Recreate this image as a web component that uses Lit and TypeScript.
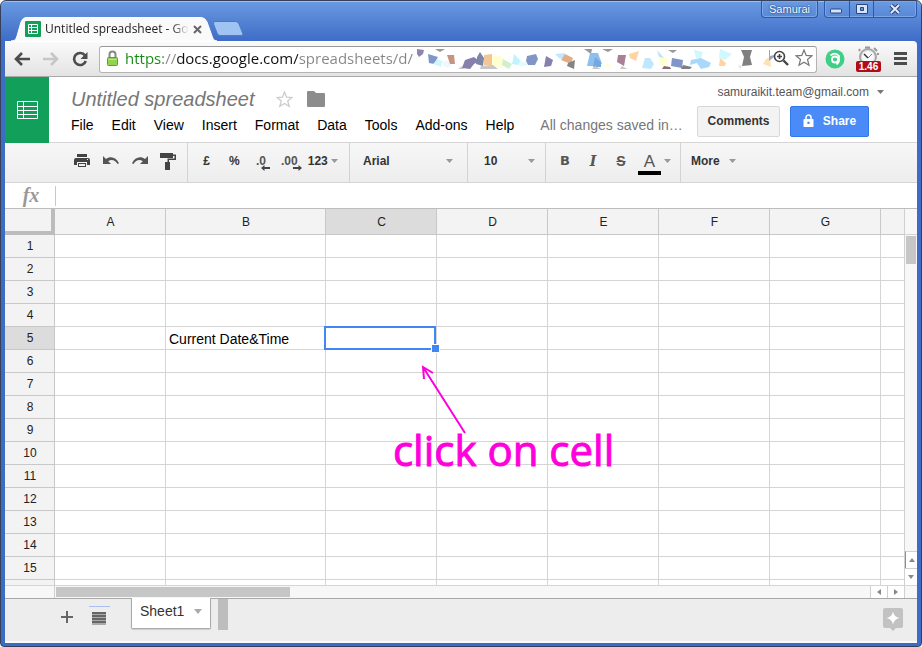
import { LitElement, html, css, svg } from "lit";
import { customElement } from "lit/decorators.js";
import { classMap } from "lit/directives/class-map.js";

const COLUMNS = ["A", "B", "C", "D", "E", "F", "G", ""];
const ROWS = Array.from({ length: 15 }, (_, i) => i + 1);
const MENUS = ["File", "Edit", "View", "Insert", "Format", "Data", "Tools", "Add-ons", "Help"];

/* Obscured tail of the address: [fill, points] */
const SHARDS: [string, string][] = [
  ["#8f86b0", "17,4 24,5 23,9 19,12 17,9"],
  ["#999999", "35,4 45,4 40,7"],
  ["#8096c8", "28,9 38,12 34,19 29,18"],
  ["#cff6ff", "38,14 42,16 41,22 33,19"],
  ["#eef8ff", "42,16 49,16 52,20 48,23 43,21"],
  ["#c99383", "47,10 54,10 55,19 50,19"],
  ["#cccccc", "58,24 62,21 64,24"],
  ["#8580ac", "65,15 74,12 79,16 74,19 70,24 62,23"],
  ["#7c86a6", "80,7 84,13 83,21 76,19 77,12"],
  ["#f3c795", "84,10 92,9 92,21 84,20"],
  ["#ffffcf", "92,10 101,11 104,16 102,23 92,20"],
  ["#cfefcf", "103,14 112,19 109,24 102,20"],
  ["#c8c8c8", "81,21 93,20 98,24 80,24"],
  ["#c2f2ff", "114,9 121,16 118,20 112,19"],
  ["#dffcff", "120,16 127,18 126,21 118,21"],
  ["#8096c8", "127,11 136,9 138,14 135,20 128,20 126,16"],
  ["#8680ac", "146,11 153,15 151,21 144,22"],
  ["#c2e8ff", "155,9 165,8 165,12 160,14"],
  ["#dfae88", "165,9 173,13 171,19 161,15"],
  ["#848484", "168,18 175,15 174,24 167,21"],
  ["#999999", "184,4 192,4 191,9"],
  ["#8cc0f0", "190,8 198,8 202,19 193,21 187,21"],
  ["#76a8e0", "195,12 201,17 201,22 193,22"],
  ["#c8c8c8", "195,21 201,24 192,24"],
  ["#999999", "202,4 213,4 208,7"],
  ["#fffee8", "205,17 211,19 210,24 204,23"],
  ["#a98098", "218,10 226,10 224,21 217,17"],
  ["#c8c8c8", "222,21 227,24 220,24"],
  ["#ffd4a0", "229,9 239,6 236,16 230,13"],
  ["#bee8ff", "245,13 250,13 254,19 251,24 242,23"],
  ["#ffffcf", "259,13 267,13 266,22 260,20"],
  ["#b8e4ff", "257,5 264,13 259,12"],
  ["#999999", "268,5 277,5 273,8"],
  ["#8096c8", "272,13 283,15 282,23 271,21"],
  ["#8a6c76", "264,21 270,22 271,24 262,24"],
  ["#808080", "283,20 292,22 290,24 281,24"],
  ["#cff8ff", "294,5 303,7 301,14 296,13"],
  ["#a8d8fc", "291,15 301,13 311,18 309,22 301,24 297,18 290,20"],
  ["#cff8ff", "320,4 332,9 325,15 319,13"],
  ["#ffd4a0", "320,13 326,18 325,21 319,21"],
  ["#808080", "341,5 352,5 350,12 352,20 342,21 344,12"],
  ["#e4e4e4", "338,20 342,21 340,24"],
  ["#ffe2b4", "366,14 370,12 371,22 363,19"],
  ["#92a8c8", "369,5 370,5 370,11 374,10 374,12 369,16"],
];

const SHEET_GLYPH = svg`<path fill="none" stroke="#fff" stroke-width="1" d="M.5.5h20v17H.5zM6.500.5v17M.5 5.500h20M.5 9.500h20M.5 13.500h20" />`;

const caret = html`<svg class="caret" width="7" height="4" viewBox="0 0 7 4" aria-hidden="true"><path d="M0 0h7L3.500 4z" /></svg>`;

@customElement("browser-frame")
export class BrowserFrame extends LitElement {
  static styles = css`
    :host {
      display: block;
      flex: none;
      font-family: "Open Sans", "Noto Sans", sans-serif;
    }
    button {
      border: 0;
      padding: 0;
      background: none;
      font: inherit;
      display: flex;
      align-items: center;
      justify-content: center;
    }
    svg {
      display: block;
      flex: none;
    }
    .titlebar {
      display: flex;
      align-items: flex-end;
      height: 40px;
      padding-left: 6px;
    }
    .tab {
      position: relative;
      width: 206px;
      height: 24px;
      display: flex;
      align-items: center;
      padding: 0 15px 0 14px;
      box-sizing: border-box;
      gap: 4px;
    }
    .tab-shape {
      position: absolute;
      left: 0;
      top: 0;
    }
    .favicon,
    .tab-title,
    .close {
      position: relative;
    }
    .tab-title {
      flex: 1;
      font-size: 12px;
      line-height: 18px;
      white-space: nowrap;
      color: #222;
      -webkit-mask-image: linear-gradient(90deg, #000 88%, transparent);
      mask-image: linear-gradient(90deg, #000 88%, transparent);
    }
    .close {
      width: 12px;
      height: 16px;
    }
    .new-tab {
      align-self: flex-end;
      margin-bottom: 4px;
      margin-left: -5px;
    }
    .window-buttons {
      margin-left: auto;
      align-self: flex-start;
      display: flex;
      gap: 6px;
    }
    .user,
    .controls {
      height: 17px;
      box-sizing: border-box;
      border: 1px solid #2f57a8;
      border-top: 0;
      border-radius: 0 0 4px 4px;
      box-shadow: inset 0 0 0 1px #7ea6e6;
    }
    .user {
      width: 57px;
      color: #fff;
      font-family: "Liberation Sans", Arial, sans-serif;
      font-size: 11px;
      text-shadow: 0 0 2px #223c78, 0 0 1px #223c78;
    }
    .controls {
      display: flex;
      width: 93px;
    }
    .controls button {
      flex: 1 1 25px;
      border-right: 1px solid #2f57a8;
    }
    .controls button:last-child {
      flex-basis: 42px;
      border: 0;
    }
    .controls .minimize {
      align-items: flex-end;
      padding-bottom: 3px;
    }
    .navbar {
      height: 36px;
      box-sizing: border-box;
      display: flex;
      align-items: center;
      padding: 0 9px 0 7px;
      background: linear-gradient(#fafafa, #e3e3e3);
      border-top: 1px solid #fff;
      border-bottom: 1px solid #a9a9a9;
      border-radius: 0 4px 0 0;
    }
    .nav {
      width: 20px;
      height: 20px;
      margin-right: 9px;
    }
    .omnibox {
      flex: 1;
      min-width: 0;
      height: 27px;
      box-sizing: border-box;
      display: flex;
      align-items: center;
      gap: 6px;
      padding: 0 3px 2px 6px;
      background: #fff;
      border: 1px solid #b4b4b4;
      border-top-color: #999;
      border-radius: 3px;
      position: relative;
    }
    .url {
      flex: 1;
      min-width: 0;
      height: 22px;
      border: 0;
      padding: 0;
      outline: 0;
      font: 15px/22px "Open Sans", "Noto Sans", sans-serif;
      color: transparent;
      background: linear-gradient(
        90deg,
        #128a12 0 38px,
        #8a8a8a 38px 52px,
        #111 52px 173px,
        #858585 173px
      );
      -webkit-background-clip: text;
      background-clip: text;
    }
    .shards {
      position: absolute;
      left: 300px;
      top: -2px;
      pointer-events: none;
    }
    .omnibox .front {
      position: relative;
    }
    .extensions {
      display: flex;
      align-items: center;
      margin-left: 8px;
      gap: 11px;
    }
    .timer {
      position: relative;
      width: 26px;
      height: 26px;
      align-items: flex-start;
    }
    .badge {
      position: absolute;
      left: 0;
      bottom: 0;
      width: 25px;
      height: 11px;
      border-radius: 2px;
      background: #b00d18;
      color: #fff;
      font: bold 10px/11px "Liberation Sans", Arial, sans-serif;
    }
  `;

  render() {
    return html`
      <div class="titlebar">
        <div class="tab">
          <svg class="tab-shape" width="206" height="24" viewBox="0 0 206 24" aria-hidden="true">
            <path fill="#fafafa" stroke="#fff" d="M0 24C4 24 5 22 6 19L10 5Q12 .5 15 .5H190Q194 .5 196 5L201 19C202 22 203 24 206 24z" />
          </svg>
          <svg class="favicon" width="16" height="16" viewBox="0 0 16 16" aria-hidden="true">
            <rect width="16" height="16" rx="1" fill="#129f5a" />
            <path fill="none" stroke="#fff" d="M3.500 3.500h9v9h-9zM6.500 3v10M3 6.500h10M3 9.500h10" />
          </svg>
          <span class="tab-title">Untitled spreadsheet - Go</span>
          <button class="close" aria-label="Close tab">
            <svg width="9" height="9" viewBox="0 0 9 9"><path stroke="#666" stroke-width="2" d="M1 1l7 7M8 1L1 8" /></svg>
          </button>
        </div>
        <button class="new-tab" aria-label="New tab">
          <svg width="32" height="17" viewBox="0 0 32 17">
            <path fill="#9fc4f3" stroke="#4d78c4" d="M3 1.500H24Q26 1.500 27 4L31 14Q31 15.500 29 15.500H8Q6 15.500 5 13L1.500 4Q1 1.500 3 1.500z" />
          </svg>
        </button>
        <div class="window-buttons">
          <button class="user">Samurai</button>
          <div class="controls">
            <button class="minimize" aria-label="Minimize">
              <svg width="13" height="6" viewBox="0 0 13 6"><rect x=".5" y="1" width="11" height="4" rx="1" fill="#d6e4fa" stroke="#2c4478" /></svg>
            </button>
            <button aria-label="Maximize">
              <svg width="12" height="11" viewBox="0 0 12 11"><path fill="#d6e4fa" fill-rule="evenodd" stroke="#2c4478" d="M.5.5h11v9H.5zM4.500 3.500h3v3h-3z" /></svg>
            </button>
            <button aria-label="Close">
              <svg width="13" height="11" viewBox="0 0 13 11">
                <path stroke="#2c4478" stroke-width="4" d="M2 1l8 8M10 1L2 9" />
                <path stroke="#e2ecfc" stroke-width="2" d="M2 1l8 8M10 1L2 9" />
              </svg>
            </button>
          </div>
        </div>
      </div>
      <div class="navbar">
        <button class="nav" aria-label="Back">
          <svg width="16" height="14" viewBox="0 0 16 14"><path fill="none" stroke="#4c4c4c" stroke-width="2.600" d="M16 7H2M8 1L2 7l6 6" /></svg>
        </button>
        <button class="nav" aria-label="Forward">
          <svg width="16" height="14" viewBox="0 0 16 14"><path fill="none" stroke="#c6c6c6" stroke-width="2.600" d="M0 7h14M8 1l6 6-6 6" /></svg>
        </button>
        <button class="nav" aria-label="Reload">
          <svg width="16" height="16" viewBox="0 0 16 16">
            <path fill="none" stroke="#4c4c4c" stroke-width="2.600" d="M13 4.500A6 6 0 1 0 13.800 10" />
            <path fill="#4c4c4c" d="M15.500 1v7H8.500z" />
          </svg>
        </button>
        <div class="omnibox">
          <svg width="13" height="16" viewBox="0 0 13 16" aria-hidden="true">
            <path fill="none" stroke="#888" stroke-width="2" d="M3.500 8V4.500a3 3 0 0 1 6 0V8" />
            <rect x="1.500" y="7.500" width="10" height="8" rx="1" fill="#92d352" stroke="#5a9e33" />
            <path stroke="#b5e685" d="M2 9.500h9" />
          </svg>
          <input class="url" aria-label="Address" value="https://docs.google.com/spreadsheets/d/" />
          <svg class="shards" width="380" height="26" viewBox="0 0 380 26" aria-hidden="true">
            ${SHARDS.map(([fill, points]) => svg`<polygon fill=${fill} points=${points} />`)}
          </svg>
          <svg class="front" width="16" height="16" viewBox="0 0 16 16" aria-hidden="true">
            <circle cx="6.500" cy="6.500" r="5" fill="#fff" stroke="#444" stroke-width="1.600" />
            <path stroke="#444" stroke-width="1.600" d="M4 6.500h5M6.500 4v5" />
            <path stroke="#444" stroke-width="2.400" d="M10.500 10.500l4.500 4.500" />
          </svg>
          <svg class="front" width="18" height="18" viewBox="0 0 18 18" aria-hidden="true">
            <path fill="#fff" stroke="#777" stroke-width="1.200" d="M9 1l2.200 5.400 5.800.4-4.500 3.700 1.500 5.800L9 13.200l-5 3.100 1.500-5.800L1 6.800l5.800-.4z" />
          </svg>
        </div>
        <div class="extensions">
          <button aria-label="Extension">
            <svg width="20" height="20" viewBox="0 0 20 20">
              <circle cx="10" cy="10" r="9.500" fill="#3fcf86" />
              <circle cx="10" cy="10.500" r="3" fill="none" stroke="#fff" stroke-width="1.800" />
              <path fill="none" stroke="#fff" stroke-width="1.800" d="M5.500 6.500Q10 2.500 14 7V12Q13.500 14 11.500 15.500" />
            </svg>
          </button>
          <button class="timer" aria-label="Timer 1.46">
            <svg width="24" height="20" viewBox="0 0 24 20">
              <circle cx="11" cy="11" r="8" fill="#e4e4e4" stroke="#a8a8a8" stroke-width="2" />
              <circle cx="11" cy="11" r="6" fill="#fafafa" />
              <path stroke="#999" stroke-width="2" d="M8 1.500h5M17 2l3 3M20 8h2M3 3L2 5" />
              <path stroke="#333" stroke-width="1.400" d="M7 8l4 4" />
              <path stroke="#d55" d="M11 12l4-4" />
            </svg>
            <span class="badge">1.46</span>
          </button>
          <button aria-label="Menu">
            <svg width="15" height="14" viewBox="0 0 15 14"><path fill="#4c4c4c" d="M1 0h13v3H1zM1 5h13v3H1zM1 10h13v3H1z" /></svg>
          </button>
        </div>
      </div>
    `;
  }
}

@customElement("sheet-header")
export class SheetHeader extends LitElement {
  static styles = css`
    :host {
      display: block;
      flex: none;
      font-family: "Liberation Sans", Arial, sans-serif;
    }
    button,
    select {
      border: 0;
      padding: 0;
      margin: 0;
      background: none;
      font: inherit;
      color: inherit;
      white-space: nowrap;
    }
    svg {
      display: block;
      flex: none;
    }
    .header {
      display: flex;
      height: 65px;
    }
    .logo {
      width: 44px;
      height: 66px;
      flex: none;
      background: #129f5a;
      display: flex;
      align-items: center;
      justify-content: center;
      position: relative;
    }
    .document {
      flex: 1;
      min-width: 0;
      padding: 10px 0 0 22px;
    }
    .name-row {
      display: flex;
      align-items: center;
      height: 24px;
    }
    .name {
      margin: 0;
      font-size: 20px;
      line-height: 24px;
      font-weight: normal;
      font-style: italic;
      color: #777;
      white-space: nowrap;
    }
    .star {
      margin: 0 14px 0 22px;
    }
    .menus {
      display: flex;
      gap: 18px;
      font-size: 14px;
      line-height: 18px;
      padding-top: 5px;
      color: #000;
    }
    .saved {
      color: #777;
      margin-left: 8px;
      white-space: nowrap;
    }
    .account {
      flex: none;
      padding: 7px 33px 0 0;
      display: flex;
      flex-direction: column;
      align-items: flex-end;
      gap: 6px;
    }
    .account .email {
      display: flex;
      align-items: center;
      gap: 8px;
      height: 16px;
      font-size: 12px;
      color: #555;
    }
    .account .buttons {
      display: flex;
      gap: 10px;
      margin-right: 15px;
      font-size: 12px;
      font-weight: bold;
    }
    .comments,
    .share {
      height: 31px;
      box-sizing: border-box;
      border-radius: 2px;
      padding-bottom: 2px;
    }
    .comments {
      width: 83px;
      border: 1px solid #d8d8d8;
      background: #f3f3f3;
      color: #333;
    }
    .share {
      width: 79px;
      border: 1px solid #3079ed;
      background: #4a8bf8;
      color: #fff;
      display: flex;
      align-items: center;
      justify-content: center;
      gap: 9px;
    }
    .caret {
      fill: #777;
    }
    .toolbar {
      display: flex;
      height: 41px;
      box-sizing: border-box;
      border-top: 1px solid #d5d5d5;
      border-bottom: 1px solid #d5d5d5;
      background: linear-gradient(#f7f7f7, #ededed);
      font-size: 12px;
      font-weight: bold;
      color: #333;
    }
    .group {
      display: flex;
      align-items: center;
      box-sizing: border-box;
      border-right: 1px solid #d3d3d3;
      flex: none;
      padding-bottom: 4px;
    }
    .group .caret {
      fill: #999;
    }
    .history {
      width: 183px;
      padding-left: 68px;
      gap: 11px;
    }
    .numbers {
      width: 162px;
      padding-left: 14px;
    }
    .numbers .unit {
      width: 9px;
      margin-right: 18px;
    }
    .numbers .decimals {
      color: #555;
      margin-right: 10px;
      display: flex;
      align-items: flex-end;
    }
    .numbers .decimals svg {
      margin: 0 0 -3px -5px;
    }
    .numbers .wide {
      margin-right: 5px;
    }
    .numbers .more-formats,
    .more {
      display: flex;
      align-items: center;
      gap: 3px;
    }
    .family {
      width: 118px;
      padding: 0 14px 4px 13px;
    }
    .size {
      width: 78px;
      padding: 0 10px 4px 16px;
    }
    select {
      appearance: none;
      flex: 1;
      min-width: 0;
    }
    .styles {
      width: 135px;
      padding-left: 13px;
      font-size: 15px;
      color: #555;
    }
    .styles .bold,
    .styles .italic,
    .styles .strike {
      width: 12px;
      margin-right: 16px;
    }
    .bold {
      font-family: "DejaVu Sans", sans-serif;
      font-size: 13px;
      font-weight: bold;
    }
    .italic {
      font-family: "DejaVu Serif", serif;
      font-size: 14px;
      font-style: italic;
      font-weight: bold;
    }
    .strike {
      text-decoration: line-through;
      font-size: 14px;
      font-weight: bold;
    }
    .colour {
      width: 23px;
      margin: 6px 3px 0 -5px;
      border-bottom: 4px solid #000;
      line-height: 18px;
      font-size: 17px;
      font-weight: normal;
    }
    .more {
      margin: 0 0 4px 10px;
      gap: 9px;
    }
    .more .caret {
      fill: #999;
    }
    .formula {
      display: flex;
      align-items: center;
      height: 26px;
      box-sizing: border-box;
      border-bottom: 1px solid #bdbdbd;
      background: #fff;
    }
    .fx {
      width: 50px;
      box-sizing: border-box;
      padding: 0 0 2px 2px;
      text-align: center;
      font: italic bold 20px/22px "Liberation Serif", "Times New Roman", serif;
      color: #999;
    }
    .formula input {
      flex: 1;
      min-width: 0;
      height: 20px;
      border: 0;
      border-left: 1px solid #c8c8c8;
      outline: 0;
      padding: 0 4px;
      font: 14px "Liberation Sans", Arial, sans-serif;
    }
  `;

  render() {
    return html`
      <header class="header">
        <a class="logo" href="#" aria-label="Sheets home">
          <svg width="21" height="18" viewBox="0 0 21 18">${SHEET_GLYPH}</svg>
        </a>
        <div class="document">
          <div class="name-row">
            <h1 class="name">Untitled spreadsheet</h1>
            <button class="star" aria-label="Star">
              <svg width="17" height="17" viewBox="0 0 17 17"><path fill="#fff" stroke="#ccc" stroke-width="1.300" d="M8.500 1l2 5.200 5.500.3-4.300 3.500 1.500 5.400-4.700-3-4.700 3L5.300 10 1 6.500l5.500-.3z" /></svg>
            </button>
            <button aria-label="Move to folder">
              <svg width="18" height="16" viewBox="0 0 18 16"><path fill="#8c8c8c" d="M0 1Q0 0 1 0h6l2 2h8q1 0 1 1v12q0 1-1 1H1q-1 0-1-1z" /></svg>
            </button>
          </div>
          <nav class="menus">
            ${MENUS.map((m) => html`<button>${m}</button>`)}
            <span class="saved">All changes saved in…</span>
          </nav>
        </div>
        <div class="account">
          <button class="email">samuraikit.team@gmail.com ${caret}</button>
          <div class="buttons">
            <button class="comments">Comments</button>
            <button class="share">
              <svg width="11" height="13" viewBox="0 0 11 13" aria-hidden="true">
                <path fill="none" stroke="#fff" stroke-width="1.500" d="M3 5.500V3.500a2.500 2.500 0 0 1 5 0v2" />
                <path fill="#fff" fill-rule="evenodd" d="M1 5h9q.5 0 .5.500v7q0 .5-.5.500H1q-.5 0-.5-.5v-7Q.5 5 1 5zM5.500 7.500a1.300 1.300 0 1 0 .01 0z" />
              </svg>
              Share
            </button>
          </div>
        </div>
      </header>
      <div class="toolbar" role="toolbar">
        <div class="group history">
          <button aria-label="Print">
            <svg width="18" height="16" viewBox="0 0 18 16"><path fill="#444" fill-rule="evenodd" d="M4 1h10v3H4zM3 5h12q2 0 2 2v5h-3V9H4v3H1V7q0-2 2-2zM5 10h8v4H5zM6 11v2h6v-2zM14 6h1v1h-1z" /></svg>
          </button>
          <button aria-label="Undo">
            <svg width="18" height="14" viewBox="0 0 18 14"><path fill="#555" d="M1 2v8h8L6.200 7.200C9 5 13 5.500 15.500 10l1.500-.7C14.500 3 8 1.500 4 5z" /></svg>
          </button>
          <button aria-label="Redo">
            <svg width="18" height="14" viewBox="0 0 18 14"><path fill="#555" d="M17 2v8H9l2.800-2.800C9 5 5 5.500 2.500 10L1 9.300C3.500 3 10 1.500 14 5z" /></svg>
          </button>
          <button aria-label="Paint format">
            <svg width="18" height="20" viewBox="0 0 18 20"><path fill="#444" d="M0 2h13v1.500h3V9H9v2h1v8H5v-8h2.500V7.500h7V5H13v2H0z" /></svg>
          </button>
        </div>
        <div class="group numbers">
          <button class="unit">£</button>
          <button class="unit">%</button>
          <button class="decimals" aria-label="Decrease decimal places">.0<svg width="10" height="6" viewBox="0 0 10 6"><path fill="#444" d="M0 3l3.500-3v2H9v2H3.500v2z" /></svg></button>
          <button class="decimals wide" aria-label="Increase decimal places">.00<svg width="10" height="6" viewBox="0 0 10 6"><path fill="#444" d="M9 3L5.500 0v2H0v2h5.500v2z" /></svg></button>
          <button class="more-formats">123 ${caret}</button>
        </div>
        <div class="group family">
          <select aria-label="Font">
            <option>Arial</option>
          </select>
          ${caret}
        </div>
        <div class="group size">
          <select aria-label="Font size">
            <option>10</option>
          </select>
          ${caret}
        </div>
        <div class="group styles">
          <button class="bold">B</button>
          <button class="italic">I</button>
          <button class="strike">S</button>
          <button class="colour" aria-label="Text colour">A</button>
          ${caret}
        </div>
        <button class="more">More ${caret}</button>
      </div>
      <div class="formula">
        <label class="fx" for="fx">fx</label>
        <input id="fx" aria-label="Formula" />
      </div>
    `;
  }
}

@customElement("sheet-grid")
export class SheetGrid extends LitElement {
  static styles = css`
    :host {
      display: flex;
      flex-direction: column;
      flex: 1;
      min-height: 0;
      font-family: "Liberation Sans", Arial, sans-serif;
      background: #fff;
    }
    .main {
      flex: 1;
      min-height: 0;
      display: flex;
    }
    .cells {
      flex: 1;
      min-width: 0;
      overflow: hidden;
      position: relative;
    }
    table {
      width: 100%;
      table-layout: fixed;
      border-collapse: separate;
      border-spacing: 0;
    }
    .index {
      width: 50px;
    }
    .column {
      width: 111px;
    }
    .column.wide {
      width: 160px;
    }
    .column.rest {
      width: auto;
    }
    th,
    td {
      box-sizing: border-box;
      height: 23px;
      padding: 0 3px;
      border-right: 1px solid #d5d5d5;
      border-bottom: 1px solid #d5d5d5;
      font-size: 14px;
      line-height: 20px;
      white-space: nowrap;
      text-align: left;
      color: #000;
    }
    th {
      background: #f3f3f3;
      border-color: #c8c8c8;
      padding: 0 2px 0 3px;
      font-size: 12px;
      font-weight: normal;
      text-align: center;
      color: #222;
    }
    td {
      padding-top: 2px;
    }
    thead th {
      height: 26px;
    }
    th.active {
      background: #dcdcdc;
    }
    thead .corner {
      border-right: 4px solid #bcbcbc;
      border-bottom: 4px solid #bcbcbc;
    }
    tr > :last-child {
      border-right: 0;
    }
    .selected {
      position: relative;
    }
    .selection {
      position: absolute;
      inset: -1px 0 -1px -2px;
      border: 2px solid #4285f4;
    }
    .handle {
      position: absolute;
      right: -4px;
      bottom: -4px;
      width: 7px;
      height: 7px;
      background: #4285f4;
      border: 1px solid #fff;
    }
    .note {
      position: absolute;
      left: 388px;
      top: 156px;
      color: #ff00dc;
      font: 42px/56px "Open Sans", "Noto Sans", sans-serif;
      -webkit-text-stroke: 1px #ff00dc;
      white-space: nowrap;
    }
    .note svg {
      display: block;
      margin-left: 26px;
    }
    .note span {
      display: block;
      margin-top: -13px;
    }
    .vertical {
      width: 13px;
      box-sizing: border-box;
      border-left: 1px solid #d0d0d0;
      background: #f7f7f7;
      display: flex;
      flex-direction: column;
    }
    .vertical .top {
      height: 26px;
      box-sizing: border-box;
      border-bottom: 1px solid #d5d5d5;
    }
    .vertical .track {
      flex: 1;
      padding: 1px 1px 0;
    }
    .vertical .thumb {
      height: 28px;
      background: #c6c6c6;
    }
    button {
      border: 0;
      padding: 0;
      background: #fff;
      display: flex;
      align-items: center;
      justify-content: center;
      box-sizing: border-box;
    }
    svg {
      display: block;
    }
    .vertical button {
      height: 17px;
      border-top: 1px solid #d0d0d0;
    }
    .vertical button.up {
      border-left: 1px solid #6f8fe0;
    }
    .horizontal {
      display: flex;
      flex: none;
      height: 14px;
      box-sizing: border-box;
      border-top: 1px solid #d5d5d5;
      border-bottom: 1px solid #a8a8a8;
      background: #f7f7f7;
    }
    .horizontal .stub {
      width: 50px;
      box-sizing: border-box;
      border-right: 1px solid #d0d0d0;
    }
    .horizontal .track {
      flex: 1;
      padding: 1px;
    }
    .horizontal .thumb {
      width: 234px;
      height: 10px;
      background: #c6c6c6;
    }
    .horizontal button {
      width: 17px;
      border-left: 1px solid #d0d0d0;
    }
    .horizontal .end {
      width: 13px;
      box-sizing: border-box;
      border-left: 1px solid #d0d0d0;
    }
  `;

  private cell(row: number, col: string) {
    if (row === 5 && col === "C") {
      return html`<td class="selected"><div class="selection"></div><div class="handle"></div></td>`;
    }
    return html`<td>${row === 5 && col === "B" ? "Current Date&Time" : ""}</td>`;
  }

  render() {
    return html`
      <div class="main">
        <div class="cells">
          <table>
            <colgroup>
              <col class="index" />
              ${COLUMNS.map((c) => html`<col class=${classMap({ column: true, wide: c === "B", rest: c === "" })} />`)}
            </colgroup>
            <thead>
              <tr>
                <th class="corner"></th>
                ${COLUMNS.map((c) => html`<th class=${classMap({ active: c === "C" })}>${c}</th>`)}
              </tr>
            </thead>
            <tbody>
              ${ROWS.map(
                (r) => html`<tr>
                  <th class=${classMap({ active: r === 5 })}>${r}</th>
                  ${COLUMNS.map((c) => this.cell(r, c))}
                </tr>`
              )}
              <tr>
                <th></th>
                ${COLUMNS.map(() => html`<td></td>`)}
              </tr>
            </tbody>
          </table>
          <div class="note">
            <svg width="48" height="70" viewBox="0 0 48 70" aria-hidden="true">
              <path fill="none" stroke="#ff00dc" stroke-width="2" d="M46 68L4 2M5 14L4 2l10 6" />
            </svg>
            <span>click on cell</span>
          </div>
        </div>
        <div class="vertical">
          <div class="top"></div>
          <div class="track"><div class="thumb"></div></div>
          <button class="up" aria-label="Scroll up"><svg width="6" height="4" viewBox="0 0 6 4"><path fill="#888" d="M0 4h6L3 0z" /></svg></button>
          <button aria-label="Scroll down"><svg width="6" height="4" viewBox="0 0 6 4"><path fill="#888" d="M0 0h6L3 4z" /></svg></button>
        </div>
      </div>
      <div class="horizontal">
        <div class="stub"></div>
        <div class="track"><div class="thumb"></div></div>
        <button aria-label="Scroll left"><svg width="4" height="6" viewBox="0 0 4 6"><path fill="#888" d="M4 0v6L0 3z" /></svg></button>
        <button aria-label="Scroll right"><svg width="4" height="6" viewBox="0 0 4 6"><path fill="#888" d="M0 0v6l4-3z" /></svg></button>
        <div class="end"></div>
      </div>
    `;
  }
}

@customElement("sheet-tabs")
export class SheetTabs extends LitElement {
  static styles = css`
    :host {
      display: flex;
      flex: none;
      height: 44px;
      box-sizing: border-box;
      align-items: flex-start;
      padding: 0 14px 0 56px;
      background: #ededed;
      border-bottom: 2px solid #fafafa;
      font-family: "Liberation Sans", Arial, sans-serif;
    }
    button {
      border: 0;
      padding: 0;
      background: none;
      font: inherit;
    }
    svg {
      display: block;
    }
    .add {
      margin: 12px 16px 0 0;
    }
    .all {
      margin: 7px 21px 0 0;
    }
    .sheet {
      display: flex;
      align-items: center;
      gap: 10px;
      width: 80px;
      height: 31px;
      margin-top: -1px;
      padding: 0 0 4px 8px;
      box-sizing: border-box;
      position: relative;
      background: #fff;
      border: 1px solid #aaa;
      border-top: 0;
      border-radius: 0 0 2px 2px;
      box-shadow: 0 1px 1px #ccc;
      font-size: 14px;
      color: #333;
    }
    .divider {
      width: 10px;
      height: 31px;
      margin-left: 7px;
      background: #bdbdbd;
    }
    .explore {
      margin: 9px 0 0 auto;
    }
  `;

  render() {
    return html`
      <button class="add" aria-label="Add sheet">
        <svg width="12" height="12" viewBox="0 0 12 12"><path fill="#666" d="M5 0h2v5h5v2H7v5H5V7H0V5h5z" /></svg>
      </button>
      <button class="all" aria-label="All sheets">
        <svg width="21" height="20" viewBox="0 0 21 20">
          <path fill="#a9c0f5" d="M0 0h21v1H0z" />
          <path fill="#aaa" d="M3 6h14v13H3z" />
          <path fill="#666" d="M3 6h14v2H3zM3 9h14v2H3zM3 12h14v2H3zM3 15h14v2H3z" />
        </svg>
      </button>
      <button class="sheet">
        Sheet1
        <svg width="8" height="5" viewBox="0 0 8 5" aria-hidden="true"><path fill="#aaa" d="M0 0h8L4 5z" /></svg>
      </button>
      <div class="divider"></div>
      <button class="explore" aria-label="Explore">
        <svg width="20" height="23" viewBox="0 0 20 23">
          <path fill="#c2c2c2" d="M2 0h16q2 0 2 2v16q0 2-2 2h-5l-3 3-3-3H2q-2 0-2-2V2Q0 0 2 0z" />
          <path fill="#fff" d="M10 3.500Q11 9 16.500 10 11 11 10 16.500 9 11 3.500 10 9 9 10 3.500z" />
        </svg>
      </button>
    `;
  }
}

@customElement("app-root")
export class AppRoot extends LitElement {
  static styles = css`
    :host {
      display: flex;
      flex-direction: column;
      height: 100vh;
      box-sizing: border-box;
      border: 1px solid #35405a;
      border-radius: 6px 6px 4px 4px;
      padding: 0 4px 3px;
      background: linear-gradient(#6a9ae2 0, #3f6cc6 40px, #3d6cc4 100%);
      box-shadow: inset 0 1px #9cbef0;
    }
    .page {
      display: flex;
      flex-direction: column;
      flex: 1;
      min-height: 0;
      background: #fff;
    }
  `;

  render() {
    return html`
      <browser-frame></browser-frame>
      <main class="page">
        <sheet-header></sheet-header>
        <sheet-grid></sheet-grid>
        <sheet-tabs></sheet-tabs>
      </main>
    `;
  }
}
